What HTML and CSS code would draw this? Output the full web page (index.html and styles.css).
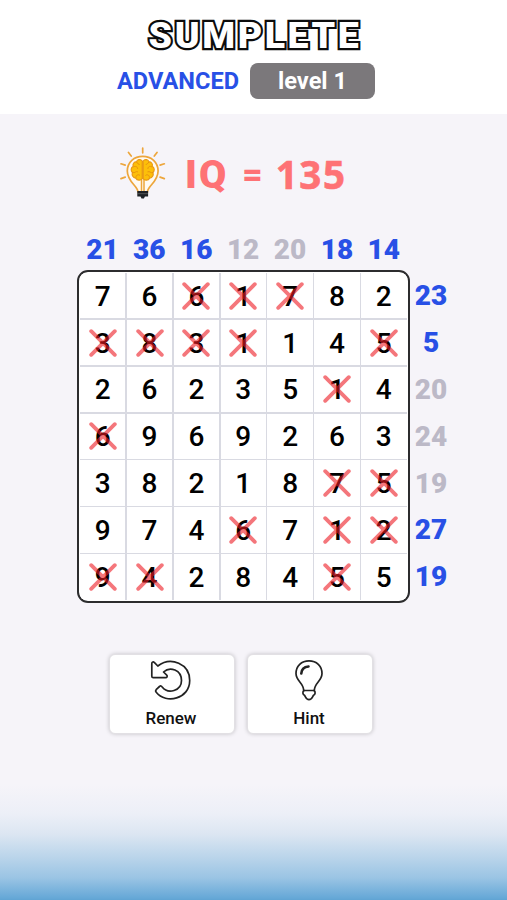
FILE: index.html
```html
<!DOCTYPE html>
<html lang="en">
<head>
<meta charset="utf-8">
<title>Sumplete</title>
<link rel="stylesheet" href="styles.css">
</head>
<body>
<svg class="defs" aria-hidden="true"><symbol id="x" viewBox="0 0 28 28"><path d="M2.2 2.2 25.8 25.8M25.8 2.2 2.2 25.8" fill="none" stroke="#ee1c24" stroke-width="3.8" stroke-linecap="round"/></symbol></svg>
<header class="header">
  <h1 class="title">SUMPLETE</h1>
  <div class="mode"><span class="mode-name">ADVANCED</span><span class="level">level 1</span></div>
</header>
<main class="game">
  <section class="iq">
    <svg class="idea" viewBox="0 0 46 54">
      <g fill="none" stroke="#eda63c" stroke-width="1.7" stroke-linecap="round">
        <path d="M22.7 1v4.8M8.5 5.5l2.7 3.6M37 5.5l-2.7 3.6M1 16.8l4.2 1.3M44.3 16.8l-4.2 1.3M1 31.6l4.2-1.5M44.3 31.6l-4.2-1.5"/>
        <path d="M18 45c0-6-10.700-10-10.700-21C7.300 15 14.200 9.300 22.700 9.300S38.100 15 38.100 24c0 11-10.700 15-10.700 21z" fill="#fffaf2"/>
        <path d="M21.500 45V16M24 45V16" stroke-width="1.500"/>
      </g>
      <path d="M22.200 14c-2-2.800-5.200-1-5.600.7-2.800.2-4.200 2.500-3.400 4.500-2.600 1.700-2.500 4.500-.8 6.300-.8 3 .7 5.200 3.300 5.600 1.500 2.800 5 2.600 6.500.6zM23.200 14c2-2.800 5.200-1 5.600.7 2.800.2 4.200 2.500 3.400 4.500 2.600 1.700 2.500 4.500.8 6.300.8 3-.7 5.200-3.300 5.600-1.500 2.800-5 2.600-6.500.6z" fill="#fdbf09" stroke="#e99a16" stroke-width="1.200"/>
      <path d="M16.600 15c.5 2 2.500 1.500 3 3M13.500 20c2-1.500 4.500 0 4 2M12.500 25.500c2.500 1 3-1.800 5.500-.6M16 30.500c-.2-2.500 2.500-3.500 4-2M28.800 15c-.5 2-2.500 1.500-3 3M32 20c-2-1.500-4.500 0-4 2M33 25.500c-2.500 1-3-1.800-5.500-.6M29.400 30.500c.2-2.500-2.500-3.500-4-2" fill="none" stroke="#e4900f" stroke-width=".9"/>
      <path d="M17.300 44h10.800v5.500h-3.200l-1 2h-2.400l-1-2h-3.200z" fill="#1d2025"/><path d="M17.500 46.700h10.400" stroke="#777" stroke-width=".6"/>
    </svg>
    <div class="iq-text"><span class="label">IQ</span> <span class="eq">=</span> <span class="num">135</span></div>
  </section>
  <section class="puzzle">
    <div class="sums cols"><b>21</b><b>36</b><b>16</b><b class="off">12</b><b class="off">20</b><b>18</b><b>14</b></div>
    <div class="board">
      <span>7</span><span>6</span><span>6<svg><use href="#x"/></svg></span><span>1<svg><use href="#x"/></svg></span><span>7<svg><use href="#x"/></svg></span><span>8</span><span>2</span>
      <span>3<svg><use href="#x"/></svg></span><span>8<svg><use href="#x"/></svg></span><span>3<svg><use href="#x"/></svg></span><span>1<svg><use href="#x"/></svg></span><span>1</span><span>4</span><span>5<svg><use href="#x"/></svg></span>
      <span>2</span><span>6</span><span>2</span><span>3</span><span>5</span><span>1<svg><use href="#x"/></svg></span><span>4</span>
      <span>6<svg><use href="#x"/></svg></span><span>9</span><span>6</span><span>9</span><span>2</span><span>6</span><span>3</span>
      <span>3</span><span>8</span><span>2</span><span>1</span><span>8</span><span>7<svg><use href="#x"/></svg></span><span>5<svg><use href="#x"/></svg></span>
      <span>9</span><span>7</span><span>4</span><span>6<svg><use href="#x"/></svg></span><span>7</span><span>1<svg><use href="#x"/></svg></span><span>2<svg><use href="#x"/></svg></span>
      <span>9<svg><use href="#x"/></svg></span><span>4<svg><use href="#x"/></svg></span><span>2</span><span>8</span><span>4</span><span>5<svg><use href="#x"/></svg></span><span>5</span>
    </div>
    <div class="sums rows"><b>23</b><b>5</b><b class="off">20</b><b class="off">24</b><b class="off">19</b><b>27</b><b>19</b></div>
  </section>
  <div class="actions">
    <button class="action">
      <svg viewBox="0 0 40 40"><path d="M.8 3.500C.8 1.800 2.500 1.500 3.500 2.700L6.800 6C20 -4 38.700 4 38.700 20.500C38.700 39 15 44.500 5.200 32.300C4 30.800 4.500 30.300 5.400 29.300L8.500 26.500C9.500 25.500 10.500 26 11.200 27C17 34.500 30.500 31 30.500 20.500C30.500 10 19 6 12.500 12L15.500 14.800C16.800 16 16.200 17.700 14.500 17.700H2.300C1.300 17.700 .8 17.200 .8 16.200Z"/></svg>
      <span>Renew</span>
    </button>
    <button class="action">
      <svg viewBox="0 0 40 40"><path d="M14.700 30.500C14.700 23 7 21 7 13.500C7 6 12.500 .8 20 .8S33 6 33 13.500C33 21 25.300 23 25.300 30.500Z"/><path d="M15 30.500C13.200 32 13.700 34.500 15.500 35.300C16.700 37.200 17 39.700 20 39.700S23.300 37.200 24.500 35.300C26.300 34.500 26.800 32 25 30.500"/><path d="M12.300 13.500C12.500 9.500 15.200 7 19.500 6.500" stroke-width="2.600"/></svg>
      <span>Hint</span>
    </button>
  </div>
</main>
</body>
</html>
```
FILE: styles.css
```css
* { box-sizing: border-box; }
body {
  margin: 0;
  height: 900px;
  overflow: hidden;
  display: flex;
  flex-direction: column;
  font-family: Roboto, sans-serif;
  background: #f6f4f9;
}
.defs { position: absolute; width: 0; height: 0; }
.header {
  height: 114px;
  background: #fff;
  padding-top: 14px;
  display: flex;
  flex-direction: column;
  align-items: center;
}
.title {
  margin: 0 0 0 3px;
  font-size: 37.500px;
  line-height: 42px;
  font-weight: 900;
  letter-spacing: 2.600px;
  color: #fff;
  -webkit-text-stroke: 4.4px #0c0c0c;
  paint-order: stroke fill;
}
.mode {
  margin: 7px 0 0 -15px;
  display: flex;
  align-items: center;
  gap: 11px;
  font-size: 23.600px;
  font-weight: 700;
}
.mode-name { color: #2850e6; }
.level {
  width: 125px;
  height: 36px;
  border-radius: 8px;
  background: #7b787b;
  color: #fff;
  text-align: center;
  line-height: 37px;
}
.game {
  flex: 1;
  background: linear-gradient(#f6f4f9 0 670px, #eceff7 700px, #dce6f2 720px, #b9d4ea 744px, #9ac4e4 764px, #66a8d7 784px, #60a4d3);
}
.iq {
  height: 116px;
  padding: 33px 0 0 120px;
  display: flex;
  align-items: flex-start;
}
.idea { width: 46px; height: 54px; flex: none; }
.iq-text {
  margin: -1px 0 0 19px;
  display: flex;
  font-family: "Open Sans", sans-serif;
  font-size: 38.500px;
  line-height: 54px;
  font-weight: 800;
  color: #fe7275;
}
.label { width: 42px; padding-top: 2px; font-family: Roboto, sans-serif; font-size: 39.500px; font-weight: 900; letter-spacing: 2px; }
.eq { margin-left: 16px; padding-top: 2px; font-size: 32px; }
.num { margin-left: 14px; padding-top: 1px; font-weight: 700; letter-spacing: 1.600px; -webkit-text-stroke: .6px #fe7275; }
.puzzle {
  margin-left: 77px;
  width: max-content;
  display: grid;
  grid-template-columns: 333px 44px;
  grid-template-rows: 40px 333px;
}
.sums { display: grid; color: #2850e6; font-size: 28px; }
.sums b { display: grid; place-items: center; font-weight: 900; }
.sums .off { color: #bcb9c7; }
.cols { grid-column: 1; grid-template-columns: repeat(7, 46.900px); padding: 0 0 2px 2px; }
.rows { grid-template-rows: repeat(7, 46.900px); padding: 2px 2px 0 0; }
.board {
  grid-column: 1;
  border: 2px solid #2c2c2e;
  border-radius: 11px;
  overflow: hidden;
  padding: 1px 1.500px 1.500px 1px;
  background: linear-gradient(#d9dae2, #d9dae2) content-box, #fff;
  display: grid;
  grid-template-columns: repeat(7, 1fr);
  grid-template-rows: repeat(7, 1fr);
  gap: 1.500px;
}
.board span {
  position: relative;
  background: #fff;
  display: grid;
  place-items: center;
  padding: 1px 0 0;
  font-size: 28px;
  font-weight: 500;
}
.board svg {
  position: absolute;
  inset: 0;
  margin: auto;
  width: 28px;
  height: 28px;
  opacity: .6;
}
.actions {
  margin: 51px 0 0 109px;
  display: flex;
  gap: 12px;
}
.action {
  width: 126px;
  height: 80px;
  padding: 6px 2px 0 0;
  border: 1px solid #e2e0e4;
  border-radius: 6px;
  background: #fff;
  box-shadow: 0 0 4px rgba(0,0,0,.2);
  font: 500 17px/20px Roboto, sans-serif;
  color: #111;
  display: flex;
  flex-direction: column;
  align-items: center;
  gap: 7px;
}
.action svg { width: 40px; height: 40px; margin-top: -1px; overflow: visible; fill: none; stroke: #222; stroke-width: 1.700; stroke-linejoin: round; stroke-linecap: round; }
.action span { padding-top: 1px; }
```
